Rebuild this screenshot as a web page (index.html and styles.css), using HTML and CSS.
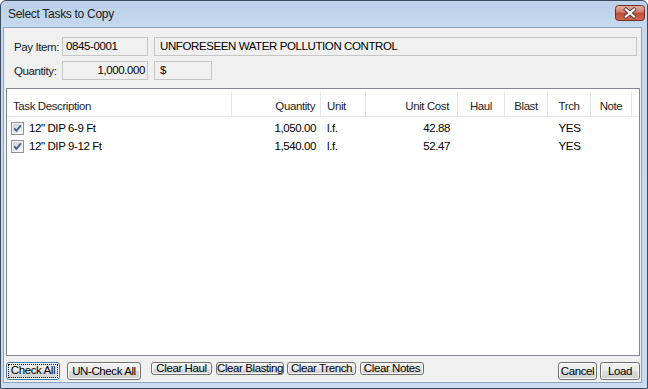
FILE: index.html
```html
<!DOCTYPE html>
<html>
<head>
<meta charset="utf-8">
<link rel="stylesheet" href="styles.css">
</head>
<body>
<div class="window">
  <div class="titlebar">
    <span class="title">Select Tasks to Copy</span>
    <div class="close">
      <svg width="30" height="16" viewBox="0 0 30 16">
        <defs>
          <linearGradient id="cg" x1="0" y1="0" x2="0" y2="1">
            <stop offset="0" stop-color="#e7b3a8"/>
            <stop offset="0.45" stop-color="#d27a6b"/>
            <stop offset="0.5" stop-color="#c24a38"/>
            <stop offset="1" stop-color="#cf6a4e"/>
          </linearGradient>
        </defs>
        <rect x="0.5" y="0.5" width="29" height="15" rx="3" fill="url(#cg)" stroke="#6e2c24"/>
        <path d="M11 4.5 L19 11.5 M19 4.5 L11 11.5" stroke="#5a3a36" stroke-width="4" stroke-linecap="square"/>
        <path d="M11 4.5 L19 11.5 M19 4.5 L11 11.5" stroke="#ffffff" stroke-width="2.2" stroke-linecap="square"/>
      </svg>
    </div>
  </div>
  <div class="client">
    <div class="fields">
      <div class="frow">
        <span class="lbl">Pay Item:</span>
        <div class="tb tb-code">0845-0001</div>
        <div class="tb tb-wide">UNFORESEEN WATER POLLUTION CONTROL</div>
      </div>
      <div class="frow">
        <span class="lbl">Quantity:</span>
        <div class="tb tb-code num">1,000.000</div>
        <div class="tb tb-dollar">$</div>
      </div>
    </div>
    <div class="list">
      <div class="lhead">
        <div class="hc left">Task Description</div>
        <div class="hc right">Quantity</div>
        <div class="hc left">Unit</div>
        <div class="hc right pr7">Unit Cost</div>
        <div class="hc center">Haul</div>
        <div class="hc center">Blast</div>
        <div class="hc center">Trch</div>
        <div class="hc center">Note</div>
        <div class="hc last"></div>
      </div>
      <div class="lrow">
        <div class="c desc"><span class="cb"><svg width="13" height="13" viewBox="0 0 13 13"><defs><linearGradient id="bg1" x1="0" y1="0" x2="1" y2="1"><stop offset="0" stop-color="#cbd2da"/><stop offset="1" stop-color="#f4f6f8"/></linearGradient></defs><rect x="0.5" y="0.5" width="12" height="12" fill="#f6f6f6" stroke="#8f9193"/><rect x="2" y="2" width="9" height="9" fill="url(#bg1)"/><path d="M3.2 6.4 L5.4 8.9 L9.9 3.4" stroke="#4a5d92" stroke-width="1.9" fill="none"/></svg></span>12" DIP 6-9 Ft</div>
        <div class="c right">1,050.00</div>
        <div class="c left">l.f.</div>
        <div class="c right pr7">42.88</div>
        <div class="c center"></div>
        <div class="c center"></div>
        <div class="c center">YES</div>
        <div class="c center"></div>
        <div class="c"></div>
      </div>
      <div class="lrow">
        <div class="c desc"><span class="cb"><svg width="13" height="13" viewBox="0 0 13 13"><defs><linearGradient id="bg2" x1="0" y1="0" x2="1" y2="1"><stop offset="0" stop-color="#cbd2da"/><stop offset="1" stop-color="#f4f6f8"/></linearGradient></defs><rect x="0.5" y="0.5" width="12" height="12" fill="#f6f6f6" stroke="#8f9193"/><rect x="2" y="2" width="9" height="9" fill="url(#bg2)"/><path d="M3.2 6.4 L5.4 8.9 L9.9 3.4" stroke="#4a5d92" stroke-width="1.9" fill="none"/></svg></span>12" DIP 9-12 Ft</div>
        <div class="c right">1,540.00</div>
        <div class="c left">l.f.</div>
        <div class="c right pr7">52.47</div>
        <div class="c center"></div>
        <div class="c center"></div>
        <div class="c center">YES</div>
        <div class="c center"></div>
        <div class="c"></div>
      </div>
    </div>
    <div class="buttons">
      <button class="btn big focus b-check"><span>Check All</span></button>
      <button class="btn big b-uncheck">UN-Check All</button>
      <button class="btn small b-haul">Clear Haul</button>
      <button class="btn small b-blast">Clear Blasting</button>
      <button class="btn small b-trench">Clear Trench</button>
      <button class="btn small b-notes">Clear Notes</button>
      <span class="spacer"></span>
      <button class="btn big b-cancel">Cancel</button>
      <button class="btn big b-load">Load</button>
    </div>
  </div>
</div>
</body>
</html>
```
FILE: styles.css
```css
* { box-sizing: border-box; }
html, body { margin: 0; padding: 0; background: #ffffff; }
body { width: 648px; height: 389px; overflow: hidden; }

.window {
  width: 648px;
  height: 389px;
  border: 1px solid #3d4c5e;
  border-radius: 6px 6px 0 0;
  background: linear-gradient(to bottom, #bcd1ea 0px, #c6d9ef 30px, #c8dbf0 100%);
  padding: 0 5px 5px 2px;
  display: flex;
  flex-direction: column;
}

.titlebar {
  height: 26px;
  display: flex;
  align-items: flex-start;
  justify-content: space-between;
  flex: none;
}
.title {
  font-family: "Liberation Sans", Arial, sans-serif;
  font-size: 12px;
  letter-spacing: -0.3px;
  color: #1b1b1b;
  padding: 6px 0 0 5px;
}
.close {
  margin: 4px -3px 0 0;
  height: 16px;
}
.close svg { display: block; }

.client {
  flex: 1;
  background: #f0f0f0;
  border: 1px solid #8ea3bd;
  display: flex;
  flex-direction: column;
  font-family: "Liberation Sans", Arial, sans-serif;
  font-size: 11.5px;
  letter-spacing: -0.4px;
  color: #000;
}

.fields {
  padding: 9px 0 0 10px;
  display: flex;
  flex-direction: column;
  gap: 5px;
}
.frow {
  display: flex;
  align-items: center;
  height: 19px;
}
.lbl {
  width: 48px;
  color: #1a1a1a;
  white-space: nowrap;
}
.tb {
  height: 19px;
  border: 1px solid #c6c6c6;
  background: #f0f0f0;
  line-height: 17px;
  padding: 0 3px;
  white-space: nowrap;
  overflow: hidden;
}
.tb-code { width: 86px; }
.tb-wide { width: 483px; margin-left: 6px; padding-left: 5px; }
.tb-dollar { width: 58px; margin-left: 6px; padding-left: 5px; }
.num { text-align: right; padding-right: 2px; }

.list {
  margin: 8px 1px 0 2px;
  height: 268px;
  background: #ffffff;
  border: 1px solid #828790;
  flex: none;
}
.lhead, .lrow {
  display: grid;
  grid-template-columns: 225px 89px 45px 92px 47px 43px 43px 41px 1fr;
}
.lhead {
  height: 28px;
  border-bottom: 1px solid #e3e6ea;
  margin-bottom: 2px;
}
.hc {
  color: #1e1e1e;
  border-right: 1px solid #e3e6ea;
  margin-top: 3px;
  padding-top: 8px;
  white-space: nowrap;
}
.hc.last { border-right: none; }
.left { text-align: left; padding-left: 6px; }
.right { text-align: right; padding-right: 5px; }
.pr7 { padding-right: 8px; }
.center { text-align: center; }

.lrow {
  height: 18px;
  line-height: 18px;
}
.c { white-space: nowrap; }
.desc {
  display: flex;
  align-items: center;
  padding-left: 4px;
}
.cb {
  width: 13px;
  height: 13px;
  margin-right: 5px;
  display: block;
}
.cb svg { display: block; }

.buttons {
  display: flex;
  align-items: flex-start;
  margin-top: 6px;
  padding: 0 1px 0 2px;
}
.btn {
  font-family: inherit;
  font-size: 11.5px;
  letter-spacing: -0.4px;
  color: #000;
  border: 1px solid #707070;
  border-radius: 3px;
  background: linear-gradient(to bottom, #f2f2f2 0%, #ebebeb 50%, #dddddd 51%, #cfcfcf 100%);
  box-shadow: inset 0 0 0 1px #fcfcfc;
  padding: 0;
  margin: 0;
  text-align: center;
  white-space: nowrap;
}
.big { height: 18px; line-height: 16px; }
.small { height: 13px; line-height: 11px; }
.focus { border-color: #3c7fb1; }
.focus span {
  display: block;
  margin: 1px;
  height: 14px;
  line-height: 13px;
  outline: 1px dotted #000;
  outline-offset: -1px;
}
.b-check { width: 54px; }
.b-uncheck { width: 74px; margin-left: 7px; }
.b-haul { width: 61px; margin-left: 10px; }
.b-blast { width: 68px; margin-left: 4px; }
.b-trench { width: 69px; margin-left: 3px; }
.b-notes { width: 64px; margin-left: 4px; }
.spacer { flex: 1; }
.b-cancel { width: 39px; }
.b-load { width: 40px; margin-left: 3px; }
```
